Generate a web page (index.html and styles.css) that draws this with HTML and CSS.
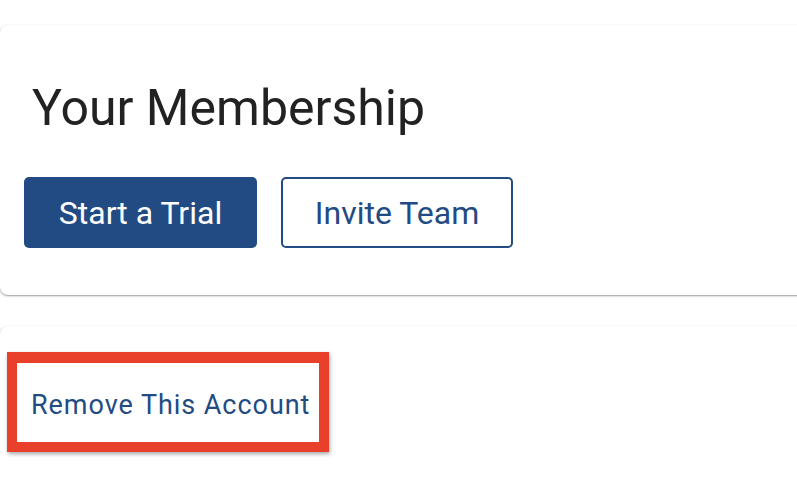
FILE: index.html
```html
<!DOCTYPE html>
<html>
<head>
<meta charset="utf-8">
<link rel="stylesheet" href="styles.css">
</head>
<body>
<div class="page">
  <section class="card membership">
    <h1 class="title">Your Membership</h1>
    <div class="actions">
      <button class="btn btn-primary">Start a Trial</button>
      <button class="btn btn-outline">Invite Team</button>
    </div>
  </section>
  <section class="card danger">
    <a class="remove-link" href="#">Remove This Account</a>
    <div class="highlight"></div>
  </section>
</div>
</body>
</html>
```
FILE: styles.css
```css
html, body {
  margin: 0;
  padding: 0;
  background: #ffffff;
  overflow: hidden;
}
body {
  font-family: Roboto, "Liberation Sans", sans-serif;
  width: 797px;
  height: 478px;
}
.page {
  padding-top: 25px;
  width: 797px;
  height: 478px;
  box-sizing: border-box;
  overflow: hidden;
  display: flex;
  flex-direction: column;
  gap: 31px;
}
.card {
  background: #ffffff;
  border-radius: 8px;
  box-shadow: 0 0 1px rgba(0,0,0,0.06), 0 1px 2px rgba(0,0,0,0.4);
  box-sizing: border-box;
  width: 830px;
  flex-shrink: 0;
}
.membership {
  height: 270px;
  padding: 53px 24px 0 24px;
}
.title {
  margin: 0 0 0 8px;
  font-size: 50px;
  font-weight: 400;
  line-height: 60px;
  color: #222222;
}
.actions {
  display: flex;
  gap: 24px;
  margin-top: 39px;
}
.btn {
  height: 71px;
  width: 233px;
  border-radius: 5px;
  font-family: Roboto, "Liberation Sans", sans-serif;
  font-size: 32px;
  font-weight: 400;
  box-sizing: border-box;
  padding: 0;
}
.btn-primary {
  background: #234b83;
  color: #ffffff;
  border: none;
}
.btn-outline {
  width: 232px;
  background: #ffffff;
  color: #234b83;
  border: 2px solid #234b83;
}
.danger {
  position: relative;
  height: 180px;
  padding: 64px 0 0 31px;
}
.remove-link {
  display: inline-block;
  color: #234b83;
  text-decoration: none;
  font-size: 27px;
  line-height: 30px;
  letter-spacing: 0.95px;
}
.highlight {
  position: absolute;
  left: 7px;
  top: 26px;
  width: 322px;
  height: 100px;
  box-sizing: border-box;
  border: 10px solid #e8402a;
  border-top-width: 11px;
  box-shadow: 1px 2px 4px rgba(0,0,0,0.35);
  pointer-events: none;
}
```
